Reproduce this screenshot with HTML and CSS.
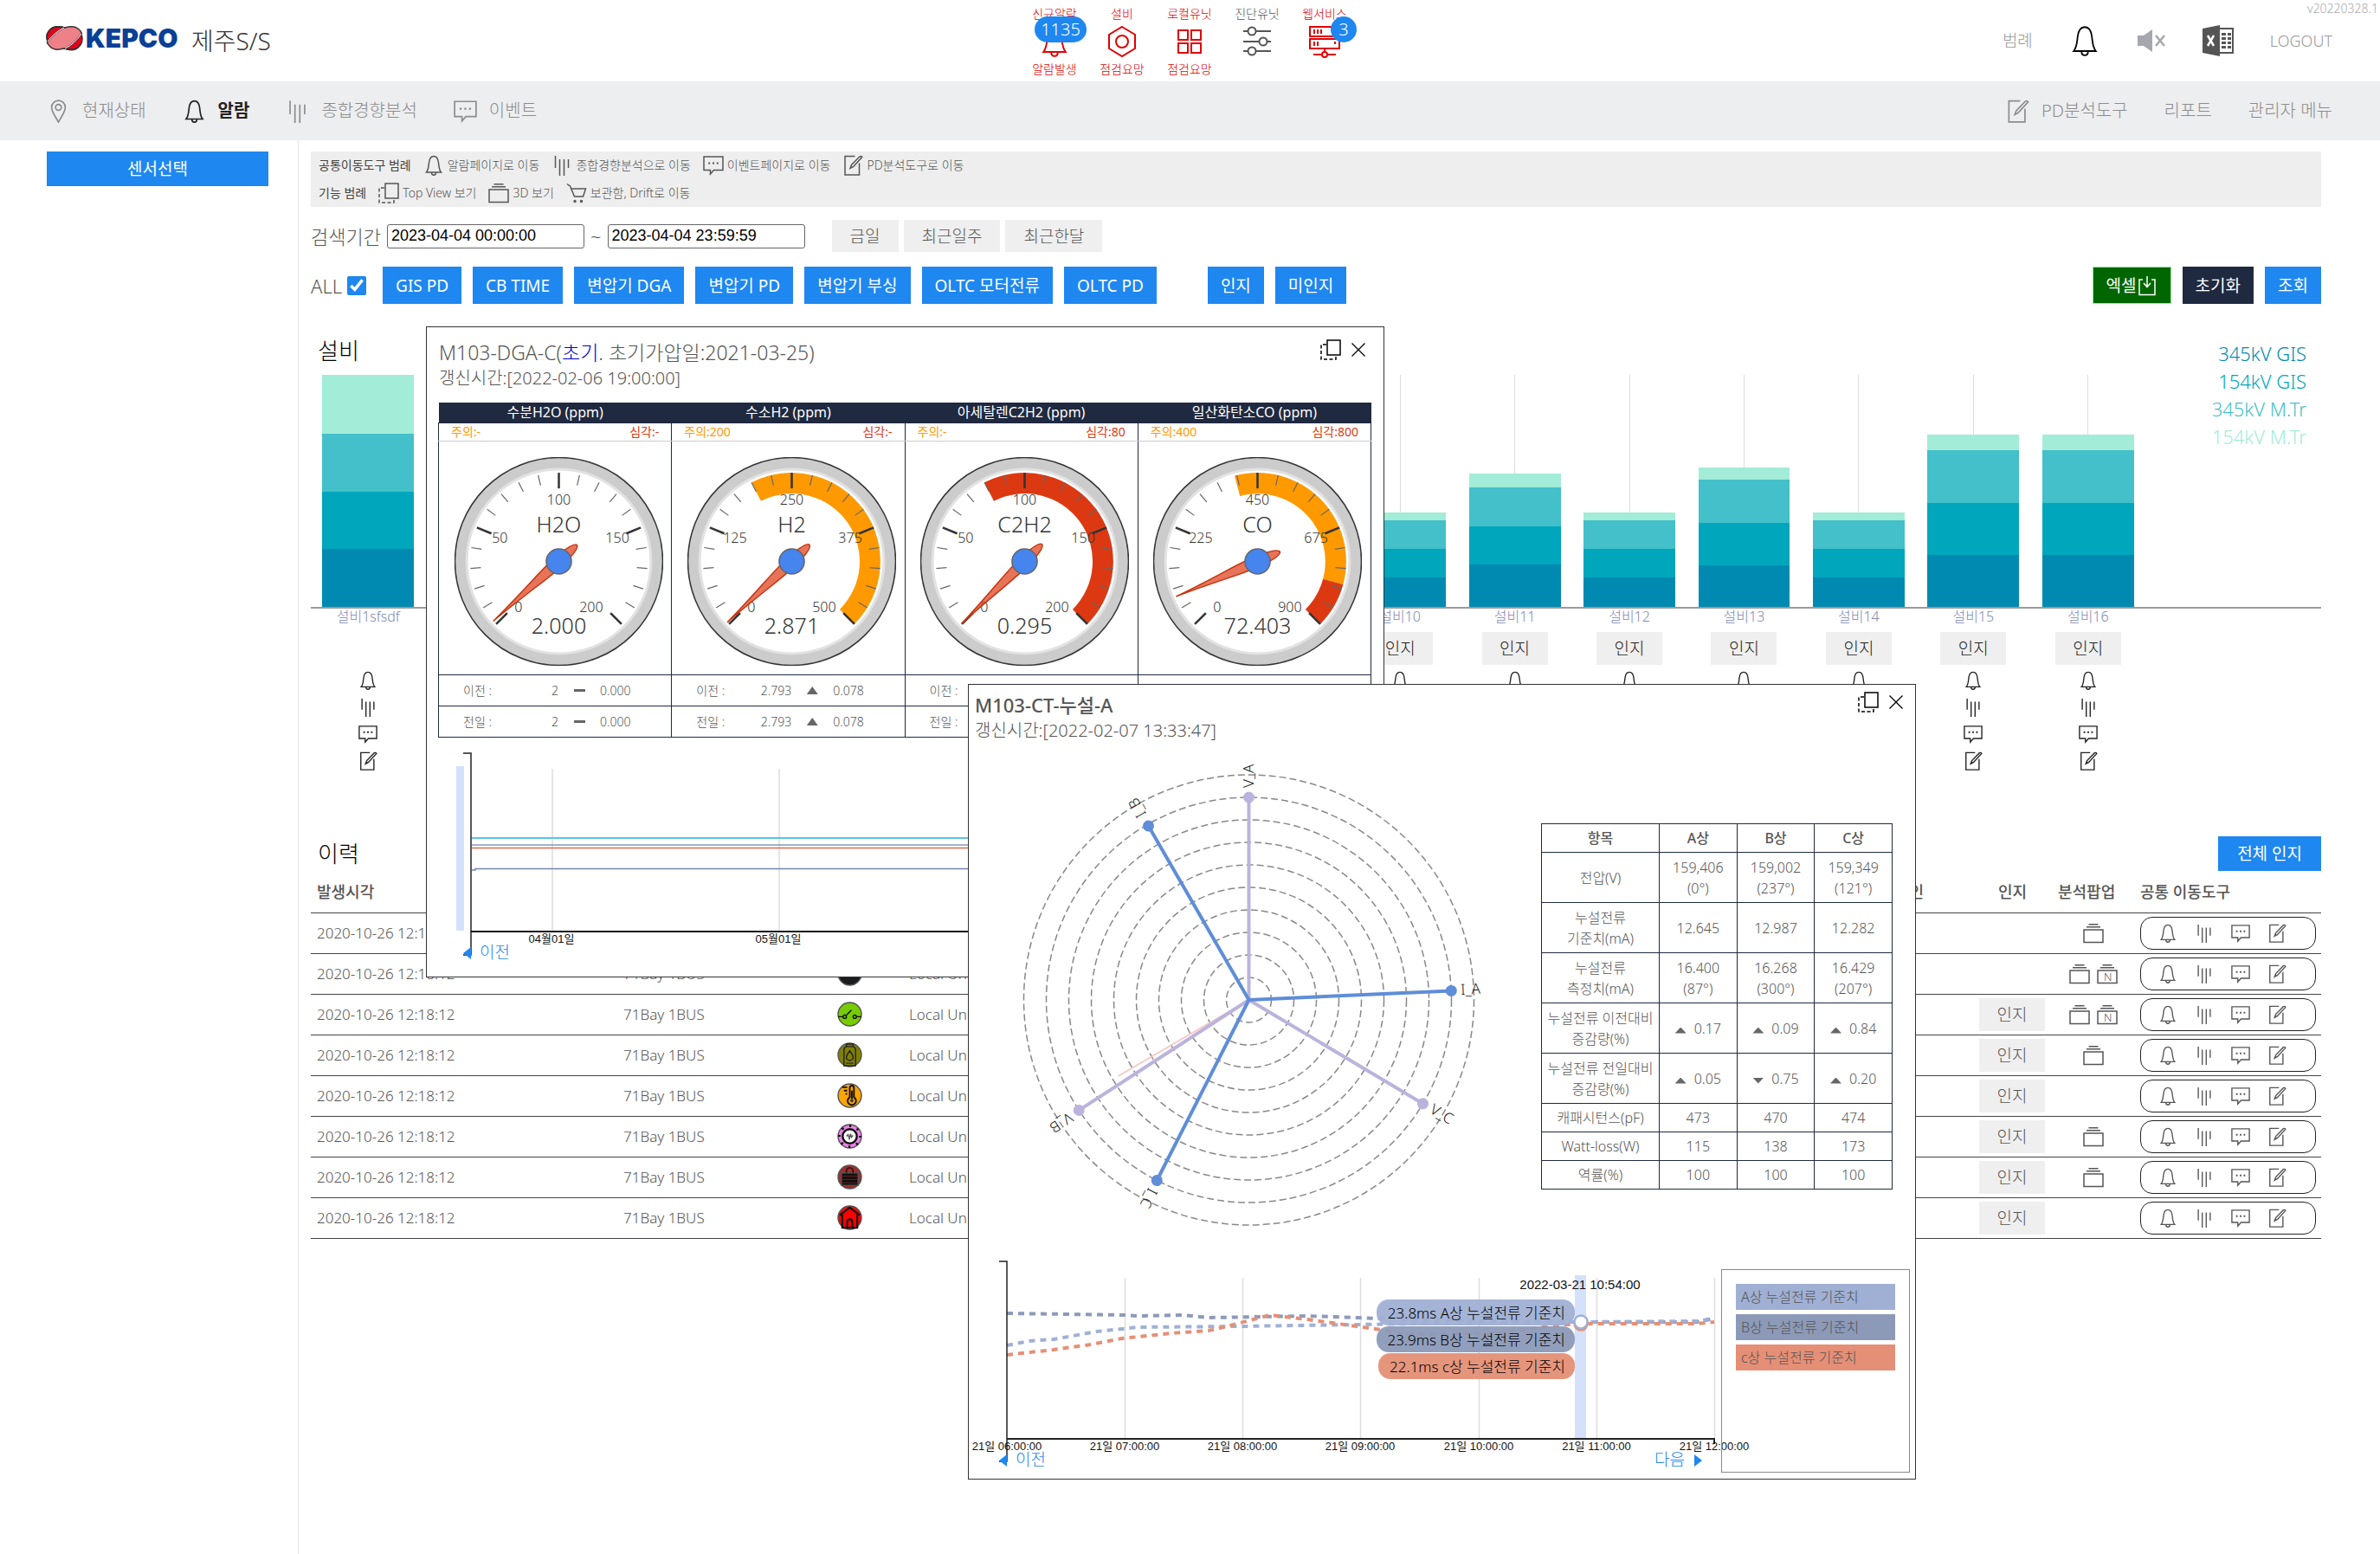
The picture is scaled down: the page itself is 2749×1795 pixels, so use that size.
FILE: index.html
```html
<!DOCTYPE html>
<html lang="ko">
<head>
<meta charset="utf-8">
<meta name="viewport" content="width=device-width, initial-scale=1">
<title>제주S/S 알람</title>
<link rel="stylesheet" href="styles.css">
</head>
<body>

<svg class="sprite" aria-hidden="true">
  <symbol id="i-bell" viewBox="0 0 24 24"><path d="M3.5 20C6 17 6 13 6.500 9C7 4.500 9 1.500 12 1.500S17 4.500 17.500 9C18 13 18 17 20.500 20ZM9.500 20.500C9.500 22.300 10.500 23.200 12 23.200S14.500 22.300 14.500 20.500"/></symbol>
  <symbol id="i-bars" viewBox="0 0 24 24"><path d="M4.500 1V15M9.500 5V24M14.500 5V24M19.500 5V15"/></symbol>
  <symbol id="i-chat" viewBox="0 0 24 24"><path d="M1 2H23V17.500H12.500L8.500 22V17.500H1Z"/><path class="dots" d="M6.200 9.500h2M11 9.500h2M15.800 9.500h2"/></symbol>
  <symbol id="i-edit" viewBox="0 0 24 24"><path d="M14.500 1.500H3V23H19.500V9.500M9 15.500L10.500 11.500L20 1.800Q22 .8 22.700 2.600L12.700 13.500Z"/></symbol>
  <symbol id="i-top" viewBox="0 0 24 24"><path d="M8 1H23V18H8Z"/><path stroke-dasharray="4 2.500" d="M7 6H1V23H18V19"/></symbol>
  <symbol id="i-box" viewBox="0 0 24 24"><path d="M1 8H23V22.500H1ZM4 4.800H20M6.500 1.800H17.500"/></symbol>
  <symbol id="i-boxn" viewBox="0 0 24 24"><path d="M1 8H23V22.500H1ZM4 4.800H20M6.500 1.800H17.500"/><text x="8" y="20">N</text></symbol>
  <symbol id="i-cart" viewBox="0 0 24 24"><path d="M1 1.500L4.500 4L9.500 16H19.500L22.500 7H6"/><circle cx="10" cy="21.500" r="1"/><circle cx="17.500" cy="21.500" r="1"/></symbol>
  <symbol id="i-pin" viewBox="0 0 24 24"><path d="M12 23.300C9 17 5 13 5 8A7 7 0 0 1 19 8C19 13 15 17 12 23.300Z"/><circle cx="12" cy="8" r="3"/></symbol>
  <symbol id="i-x" viewBox="0 0 24 24"><path d="M3 3L21 21M21 3L3 21"/></symbol>
  <symbol id="i-down" viewBox="0 0 24 24"><path d="M7 5H3V22.500H21V5H17M12 1V13M8 9L12 13.500L16 9"/></symbol>
  <symbol id="ticks" viewBox="-120 -120 240 240">
    <circle r="119.500" fill="#ccc" stroke="#333"/>
    <circle r="106" fill="#fff" stroke="#e2e2e2" stroke-width="3"/>
  </symbol>
  <symbol id="marks" viewBox="-120 -120 240 240">
    <g stroke="#666" stroke-width="1.200">
      <path d="M0-102V-90" transform="rotate(-121.500)"/>
      <path d="M0-102V-90" transform="rotate(-108)"/><path d="M0-102V-90" transform="rotate(-94.500)"/><path d="M0-102V-90" transform="rotate(-81)"/>
      <path d="M0-102V-90" transform="rotate(-54)"/><path d="M0-102V-90" transform="rotate(-40.500)"/><path d="M0-102V-90" transform="rotate(-27)"/><path d="M0-102V-90" transform="rotate(-13.500)"/>
      <path d="M0-102V-90" transform="rotate(13.500)"/><path d="M0-102V-90" transform="rotate(27)"/><path d="M0-102V-90" transform="rotate(40.500)"/><path d="M0-102V-90" transform="rotate(54)"/>
      <path d="M0-102V-90" transform="rotate(81)"/><path d="M0-102V-90" transform="rotate(94.500)"/><path d="M0-102V-90" transform="rotate(108)"/><path d="M0-102V-90" transform="rotate(121.500)"/>
    </g>
    <g stroke="#333" stroke-width="2.500">
      <path d="M0-102V-84" transform="rotate(-135)"/><path d="M0-102V-84" transform="rotate(-67.500)"/><path d="M0-102V-84"/><path d="M0-102V-84" transform="rotate(67.500)"/><path d="M0-102V-84" transform="rotate(135)"/>
    </g>
  </symbol>
  <symbol id="needle" viewBox="-120 -120 240 240"><path d="M0-102C-2-50-8-10-6 6C-5 20-3 28 0 28S5 20 6 6C8-10 2-50 0-102Z" fill="#dc3912" fill-opacity=".7" stroke="#c63310"/></symbol>
</svg>

<header class="top">
  <div class="brand">
    <svg class="logo" viewBox="0 0 156 34" role="img" aria-label="KEPCO">
      <path d="M1 18Q-2 9 4 4T21 2Q31-1 36 3T40 10Q41 20 36 25T20 26Q9 29 4 24T1 18Z" fill="#ee8088"/>
      <path d="M1 18Q-2 9 4 4T20 2Q9 7 1 18Z" fill="#e2001a"/>
      <path d="M40 9Q43 19 37 24T21 26Q32 21 40 9Z" fill="#e2001a"/>
      <path d="M20 2Q9 7 1 18M21 26Q32 21 40 9" stroke="#fff" stroke-width="1"/>
      <text x="45" y="25">KEPCO</text>
    </svg>
    <span class="site">제주S/S</span>
  </div>
  <div class="status">
    <a href="#" class="st red"><span>신규알람</span><svg><use href="#i-bell"/></svg><span>알람발생</span><b class="badge wide">1135</b></a>
    <a href="#" class="st red"><span>설비</span><svg viewBox="0 0 36 36"><path d="M18 1L33 10V26L18 35L3 26V10Z"/><circle cx="18" cy="18" r="7"/></svg><span>점검요망</span></a>
    <a href="#" class="st red"><span>로컬유닛</span><svg viewBox="0 0 36 36"><path d="M5 5H16V16H5ZM20 5H31V16H20ZM5 20H16V31H5ZM20 20H31V31H20Z"/></svg><span>점검요망</span></a>
    <a href="#" class="st"><span>진단유닛</span><svg viewBox="0 0 36 36"><path d="M2 6H7M17 6H34M2 18H20M30 18H34M2 29H7M17 29H34"/><circle cx="12" cy="6" r="4.500"/><circle cx="25" cy="18" r="4.500"/><circle cx="12" cy="29" r="4.500"/></svg></a>
    <a href="#" class="st red"><span>웹서비스</span><svg viewBox="0 0 36 36"><path d="M1 1H35V12H1ZM1 15H35V26H1ZM18 26V30M5 33H14M22 33H31M6 4V9M10 4V9M14 4V9M6 18V23M10 18V23M30 18V21"/><circle cx="18" cy="33" r="3"/></svg><b class="badge">3</b></a>
  </div>
  <div class="tools">
    <span class="version">v20220328.1</span>
    <a href="#">범례</a>
    <a href="#" class="bell" aria-label="알람"><svg><use href="#i-bell"/></svg></a>
    <a href="#" aria-label="음소거"><svg class="mute" viewBox="0 0 34 28"><path d="M1 8H8L18 1V27L8 20H1Z" fill="#a6a6ae" stroke="none"/><path d="M22 8L32 20M32 8L22 20" stroke="#a6a6ae" stroke-width="2.500"/></svg></a>
    <a href="#" aria-label="엑셀"><svg class="xls" viewBox="0 0 36 36"><path d="M19 4H35V32H19" fill="#fff" stroke="#555" stroke-width="2"/><path d="M22 9h5v3h-5zM29 9h4v3h-4zM22 14h5v3h-5zM29 14h4v3h-4zM22 19h5v3h-5zM29 19h4v3h-4zM22 24h5v3h-5zM29 24h4v3h-4z" fill="#555" stroke="none"/><path d="M0 4L20 0V36L0 32Z" fill="#555" stroke="none"/><path d="M6 12L13 24M13 12L6 24" stroke="#fff" stroke-width="2.500"/></svg></a>
    <a href="#" class="out">LOGOUT</a>
  </div>
</header>

<nav class="nav">
  <a href="#"><svg><use href="#i-pin"/></svg>현재상태</a>
  <a href="#" class="on"><svg><use href="#i-bell"/></svg>알람</a>
  <a href="#"><svg><use href="#i-bars"/></svg>종합경향분석</a>
  <a href="#"><svg><use href="#i-chat"/></svg>이벤트</a>
  <a href="#" class="push"><svg><use href="#i-edit"/></svg>PD분석도구</a>
  <a href="#">리포트</a>
  <a href="#">관리자 메뉴</a>
</nav>

<div class="page">
<aside class="side"><button class="btn block">센서선택</button></aside>

<main class="main">
  <div class="guide">
    <p><b>공통이동도구 범례</b><span><svg><use href="#i-bell"/></svg>알람페이지로 이동</span><span><svg><use href="#i-bars"/></svg>종합경향분석으로 이동</span><span><svg><use href="#i-chat"/></svg>이벤트페이지로 이동</span><span><svg><use href="#i-edit"/></svg>PD분석도구로 이동</span></p>
    <p><b>기능 범례</b><span><svg><use href="#i-top"/></svg>Top View 보기</span><span><svg><use href="#i-box"/></svg>3D 보기</span><span><svg><use href="#i-cart"/></svg>보관함, Drift로 이동</span></p>
  </div>

  <form class="search">
    <label for="from">검색기간</label>
    <input id="from" type="text" value="2023-04-04 00:00:00">
    <label for="to">~</label>
    <input id="to" type="text" value="2023-04-04 23:59:59">
    <div class="presets">
      <button type="button" class="soft">금일</button>
      <button type="button" class="soft">최근일주</button>
      <button type="button" class="soft">최근한달</button>
    </div>
  </form>

  <div class="filters">
    <label class="all">ALL<input type="checkbox" checked></label>
    <button class="btn">GIS PD</button>
    <button class="btn">CB TIME</button>
    <button class="btn">변압기 DGA</button>
    <button class="btn">변압기 PD</button>
    <button class="btn">변압기 부싱</button>
    <button class="btn">OLTC 모터전류</button>
    <button class="btn">OLTC PD</button>
    <button class="btn apart">인지</button>
    <button class="btn">미인지</button>
    <button class="btn excel">엑셀<svg><use href="#i-down"/></svg></button>
    <button class="btn dark">초기화</button>
    <button class="btn">조회</button>
  </div>

  <section class="equip">
    <h2>설비</h2>
    <ul class="kinds"><li>345kV GIS</li><li>154kV GIS</li><li>345kV M.Tr</li><li>154kV M.Tr</li></ul>
    <div class="chart">
      <div class="col c1">
        <div class="plot"><div class="bar"><i style="height:68px"></i><i style="height:67px"></i><i style="height:66px"></i><i style="height:67px"></i></div></div>
        <span class="name">설비1sfsdf</span><span class="ack"></span>
        <svg><use href="#i-bell"/></svg><svg><use href="#i-bars"/></svg><svg><use href="#i-chat"/></svg><svg><use href="#i-edit"/></svg>
      </div>
      <div class="col c10">
        <div class="plot"><div class="bar"><i style="height:9px"></i><i style="height:33px"></i><i style="height:33px"></i><i style="height:34px"></i></div></div>
        <span class="name">설비10</span><button class="soft ack">인지</button>
        <svg><use href="#i-bell"/></svg><svg><use href="#i-bars"/></svg><svg><use href="#i-chat"/></svg><svg><use href="#i-edit"/></svg>
      </div>
      <div class="col">
        <div class="plot"><div class="bar"><i style="height:16px"></i><i style="height:45px"></i><i style="height:44px"></i><i style="height:49px"></i></div></div>
        <span class="name">설비11</span><button class="soft ack">인지</button>
        <svg><use href="#i-bell"/></svg><svg><use href="#i-bars"/></svg><svg><use href="#i-chat"/></svg><svg><use href="#i-edit"/></svg>
      </div>
      <div class="col">
        <div class="plot"><div class="bar"><i style="height:9px"></i><i style="height:33px"></i><i style="height:33px"></i><i style="height:34px"></i></div></div>
        <span class="name">설비12</span><button class="soft ack">인지</button>
        <svg><use href="#i-bell"/></svg><svg><use href="#i-bars"/></svg><svg><use href="#i-chat"/></svg><svg><use href="#i-edit"/></svg>
      </div>
      <div class="col">
        <div class="plot"><div class="bar"><i style="height:14px"></i><i style="height:50px"></i><i style="height:49px"></i><i style="height:48px"></i></div></div>
        <span class="name">설비13</span><button class="soft ack">인지</button>
        <svg><use href="#i-bell"/></svg><svg><use href="#i-bars"/></svg><svg><use href="#i-chat"/></svg><svg><use href="#i-edit"/></svg>
      </div>
      <div class="col">
        <div class="plot"><div class="bar"><i style="height:9px"></i><i style="height:33px"></i><i style="height:33px"></i><i style="height:34px"></i></div></div>
        <span class="name">설비14</span><button class="soft ack">인지</button>
        <svg><use href="#i-bell"/></svg><svg><use href="#i-bars"/></svg><svg><use href="#i-chat"/></svg><svg><use href="#i-edit"/></svg>
      </div>
      <div class="col">
        <div class="plot"><div class="bar"><i style="height:18px"></i><i style="height:61px"></i><i style="height:60px"></i><i style="height:60px"></i></div></div>
        <span class="name">설비15</span><button class="soft ack">인지</button>
        <svg><use href="#i-bell"/></svg><svg><use href="#i-bars"/></svg><svg><use href="#i-chat"/></svg><svg><use href="#i-edit"/></svg>
      </div>
      <div class="col">
        <div class="plot"><div class="bar"><i style="height:18px"></i><i style="height:61px"></i><i style="height:60px"></i><i style="height:60px"></i></div></div>
        <span class="name">설비16</span><button class="soft ack">인지</button>
        <svg><use href="#i-bell"/></svg><svg><use href="#i-bars"/></svg><svg><use href="#i-chat"/></svg><svg><use href="#i-edit"/></svg>
      </div>
      <div class="axis"></div>
    </div>
  </section>

  <section class="history">
    <div class="bar-head"><h2>이력</h2><button class="btn all-ack">전체 인지</button></div>
    <table class="log">
      <colgroup><col class="w1"><col class="w2"><col class="w3"><col><col class="w5"><col class="w6"><col class="w7"><col class="w8"></colgroup>
      <thead><tr><th>발생시각</th><th></th><th></th><th></th><th>확인</th><th class="mid">인지</th><th>분석팝업</th><th>공통 이동도구</th></tr></thead>
      <tbody>
        <tr><td>2020-10-26 12:18:12</td><td>71Bay 1BUS</td><td></td><td>Local Unit</td><td></td><td></td><td class="mid"><svg><use href="#i-box"/></svg></td><td><div class="pill"><svg><use href="#i-bell"/></svg><svg><use href="#i-bars"/></svg><svg><use href="#i-chat"/></svg><svg><use href="#i-edit"/></svg></div></td></tr>
        <tr><td>2020-10-26 12:18:12</td><td>71Bay 1BUS</td><td class="mid"><svg class="kind" viewBox="0 0 28 28"><circle cx="14" cy="14" r="14" fill="#1b1c1e"/><path d="M9 10L19 18M19 10L9 18" stroke="#fff"/></svg></td><td>Local Unit</td><td></td><td></td><td class="mid"><svg><use href="#i-box"/></svg><svg><use href="#i-boxn"/></svg></td><td><div class="pill"><svg><use href="#i-bell"/></svg><svg><use href="#i-bars"/></svg><svg><use href="#i-chat"/></svg><svg><use href="#i-edit"/></svg></div></td></tr>
        <tr><td>2020-10-26 12:18:12</td><td>71Bay 1BUS</td><td class="mid"><svg class="kind" viewBox="0 0 28 28"><circle cx="14" cy="14" r="14" fill="#7c0"/><path d="M0 17H6M10 15L16 9M22 17H28" stroke="#111" stroke-width="1.500"/><circle cx="8" cy="17" r="2" stroke="#111" stroke-width="1.500"/><circle cx="20" cy="17" r="2" stroke="#111" stroke-width="1.500"/></svg></td><td>Local Unit</td><td></td><td><button class="soft ack">인지</button></td><td class="mid"><svg><use href="#i-box"/></svg><svg><use href="#i-boxn"/></svg></td><td><div class="pill"><svg><use href="#i-bell"/></svg><svg><use href="#i-bars"/></svg><svg><use href="#i-chat"/></svg><svg><use href="#i-edit"/></svg></div></td></tr>
        <tr><td>2020-10-26 12:18:12</td><td>71Bay 1BUS</td><td class="mid"><svg class="kind" viewBox="0 0 28 28"><circle cx="14" cy="14" r="14" fill="#808000"/><path d="M10 1H18V4H10ZM10 4Q7 5 7 8V27H21V8Q21 5 18 4M14 9Q10 14 10 17A4 3.500 0 0 0 18 17Q18 14 14 9Z" stroke="#222" stroke-width="1.500"/><path d="M10 24H18" stroke="#222" stroke-width="2" stroke-dasharray="2 1"/></svg></td><td>Local Unit</td><td></td><td><button class="soft ack">인지</button></td><td class="mid"><svg><use href="#i-box"/></svg></td><td><div class="pill"><svg><use href="#i-bell"/></svg><svg><use href="#i-bars"/></svg><svg><use href="#i-chat"/></svg><svg><use href="#i-edit"/></svg></div></td></tr>
        <tr><td>2020-10-26 12:18:12</td><td>71Bay 1BUS</td><td class="mid"><svg class="kind" viewBox="0 0 28 28"><circle cx="14" cy="14" r="14" fill="#ffa500"/><path d="M14 16V5Q14 2 16.500 2T19 5V16A5 5 0 1 1 14 16ZM5 4H11M7 8H11M9 12H11M16.500 8V20" stroke="#111" stroke-width="2"/><circle cx="16.500" cy="20" r="1.500" fill="#111"/></svg></td><td>Local Unit</td><td></td><td><button class="soft ack">인지</button></td><td></td><td><div class="pill"><svg><use href="#i-bell"/></svg><svg><use href="#i-bars"/></svg><svg><use href="#i-chat"/></svg><svg><use href="#i-edit"/></svg></div></td></tr>
        <tr><td>2020-10-26 12:18:12</td><td>71Bay 1BUS</td><td class="mid"><svg class="kind" viewBox="0 0 28 28"><circle cx="14" cy="14" r="14" fill="#ee82ee"/><circle cx="14" cy="14" r="12.500" stroke="#111" stroke-width="3" stroke-dasharray="2.500 7.317" stroke-dashoffset="1"/><circle cx="14" cy="14" r="8.500" fill="#fff" stroke="#111" stroke-width="2.500"/><path d="M10 14L12 12L13.500 17L15 11L16 15L18 13" stroke="#555"/></svg></td><td>Local Unit</td><td></td><td><button class="soft ack">인지</button></td><td class="mid"><svg><use href="#i-box"/></svg></td><td><div class="pill"><svg><use href="#i-bell"/></svg><svg><use href="#i-bars"/></svg><svg><use href="#i-chat"/></svg><svg><use href="#i-edit"/></svg></div></td></tr>
        <tr><td>2020-10-26 12:18:12</td><td>71Bay 1BUS</td><td class="mid"><svg class="kind" viewBox="0 0 28 28"><circle cx="14" cy="14" r="14" fill="#a52a2a"/><path d="M4 9H24V24H4Z" fill="#111"/><path d="M10 9V7A4 4 0 0 1 18 7V9" stroke="#111" stroke-width="1.500"/><path d="M5 13H23M5 17H23M5 21H23" stroke="#a52a2a" stroke-width="1" stroke-opacity=".6"/></svg></td><td>Local Unit</td><td></td><td><button class="soft ack">인지</button></td><td class="mid"><svg><use href="#i-box"/></svg></td><td><div class="pill"><svg><use href="#i-bell"/></svg><svg><use href="#i-bars"/></svg><svg><use href="#i-chat"/></svg><svg><use href="#i-edit"/></svg></div></td></tr>
        <tr><td>2020-10-26 12:18:12</td><td>71Bay 1BUS</td><td class="mid"><svg class="kind" viewBox="0 0 28 28"><circle cx="14" cy="14" r="14" fill="red"/><path d="M2 11L14 2L26 11M5 10V26H23V10M11 26V19A3 3 0 0 1 17 19V26" stroke="#111" stroke-width="2.200"/></svg></td><td>Local Unit</td><td></td><td><button class="soft ack">인지</button></td><td></td><td><div class="pill"><svg><use href="#i-bell"/></svg><svg><use href="#i-bars"/></svg><svg><use href="#i-chat"/></svg><svg><use href="#i-edit"/></svg></div></td></tr>
      </tbody>
    </table>
  </section>
</main>
</div>

<section class="win win-dga">
  <div class="win-head">
    <div><h3>M103-DGA-C(<em>초기</em>. 초기가압일:2021-03-25)</h3><p>갱신시간:[2022-02-06 19:00:00]</p></div>
    <button class="ico" aria-label="Top View"><svg><use href="#i-top"/></svg></button>
    <button class="ico" aria-label="닫기"><svg class="x"><use href="#i-x"/></svg></button>
  </div>
  <table class="gauges">
    <thead><tr><th>수분H2O (ppm)</th><th>수소H2 (ppm)</th><th>아세탈렌C2H2 (ppm)</th><th>일산화탄소CO (ppm)</th></tr></thead>
    <tbody>
      <tr class="limits">
        <td><div><span>주의:-</span><b>심각:-</b></div></td>
        <td><div><span>주의:200</span><b>심각:-</b></div></td>
        <td><div><span>주의:-</span><b>심각:80</b></div></td>
        <td><div><span>주의:400</span><b>심각:800</b></div></td>
      </tr>
      <tr class="dials">
        <td><svg viewBox="-120 -120 240 240"><use href="#ticks" x="-120" y="-120" width="240" height="240"/><use href="#marks" x="-120" y="-120" width="240" height="240"/>
          <text class="s" y="-65" text-anchor="middle">100</text><text class="s" x="-77" y="-21">50</text><text class="s" x="81" y="-21" text-anchor="end">150</text><text class="s" x="-51" y="58">0</text><text class="s" x="51" y="58" text-anchor="end">200</text><text class="l" y="-33" text-anchor="middle">H2O</text><text class="l" y="83" text-anchor="middle">2.000</text>
          <g transform="rotate(-132.300)"><use href="#needle" x="-120" y="-120" width="240" height="240"/></g><circle r="14.500" fill="#4684ee" stroke="#666"/></svg></td>
        <td><svg viewBox="-120 -120 240 240"><use href="#ticks" x="-120" y="-120" width="240" height="240"/><path d="M-46.300-90.900A102 102 0 0 1 72.100 72.100L55.200 55.200A78 78 0 0 0-35.400-69.500Z" fill="#f90"/><use href="#marks" x="-120" y="-120" width="240" height="240"/>
          <text class="s" y="-65" text-anchor="middle">250</text><text class="s" x="-79" y="-21">125</text><text class="s" x="81" y="-21" text-anchor="end">375</text><text class="s" x="-51" y="58">0</text><text class="s" x="51" y="58" text-anchor="end">500</text><text class="l" y="-33" text-anchor="middle">H2</text><text class="l" y="83" text-anchor="middle">2.871</text>
          <g transform="rotate(-133.400)"><use href="#needle" x="-120" y="-120" width="240" height="240"/></g><circle r="14.500" fill="#4684ee" stroke="#666"/></svg></td>
        <td><svg viewBox="-120 -120 240 240"><use href="#ticks" x="-120" y="-120" width="240" height="240"/><path d="M-46.300-90.900A102 102 0 0 1 72.100 72.100L55.200 55.200A78 78 0 0 0-35.400-69.500Z" fill="#dc3912"/><use href="#marks" x="-120" y="-120" width="240" height="240"/>
          <text class="s" y="-65" text-anchor="middle">100</text><text class="s" x="-77" y="-21">50</text><text class="s" x="81" y="-21" text-anchor="end">150</text><text class="s" x="-51" y="58">0</text><text class="s" x="51" y="58" text-anchor="end">200</text><text class="l" y="-33" text-anchor="middle">C2H2</text><text class="l" y="83" text-anchor="middle">0.295</text>
          <g transform="rotate(-134.600)"><use href="#needle" x="-120" y="-120" width="240" height="240"/></g><circle r="14.500" fill="#4684ee" stroke="#666"/></svg></td>
        <td><svg viewBox="-120 -120 240 240"><use href="#ticks" x="-120" y="-120" width="240" height="240"/><path d="M-26.400-98.500A102 102 0 0 1 98.500 26.400L75.300 20.200A78 78 0 0 0-20.200-75.300Z" fill="#f90"/><path d="M98.500 26.400A102 102 0 0 1 72.100 72.100L55.200 55.200A78 78 0 0 0 75.300 20.200Z" fill="#dc3912"/><use href="#marks" x="-120" y="-120" width="240" height="240"/>
          <text class="s" y="-65" text-anchor="middle">450</text><text class="s" x="-79" y="-21">225</text><text class="s" x="81" y="-21" text-anchor="end">675</text><text class="s" x="-51" y="58">0</text><text class="s" x="51" y="58" text-anchor="end">900</text><text class="l" y="-33" text-anchor="middle">CO</text><text class="l" y="83" text-anchor="middle">72.403</text>
          <g transform="rotate(-113.300)"><use href="#needle" x="-120" y="-120" width="240" height="240"/></g><circle r="14.500" fill="#4684ee" stroke="#666"/></svg></td>
      </tr>
      <tr class="diff">
        <td><div><span>이전 :</span><span>2</span><i class="flat"></i><span>0.000</span></div></td>
        <td><div><span>이전 :</span><span>2.793</span><i class="up"></i><span>0.078</span></div></td>
        <td><div><span>이전 :</span></div></td>
        <td></td>
      </tr>
      <tr class="diff">
        <td><div><span>전일 :</span><span>2</span><i class="flat"></i><span>0.000</span></div></td>
        <td><div><span>전일 :</span><span>2.793</span><i class="up"></i><span>0.078</span></div></td>
        <td><div><span>전일 :</span></div></td>
        <td></td>
      </tr>
    </tbody>
  </table>
  <svg class="trend" viewBox="493 860 1105 268">
    <path d="M638 888V1075M900 888V1075" stroke="#ddd"/>
    <path d="M527 885H536V1075H527Z" fill="#d5e0fb"/>
    <path d="M545 968H1590" stroke="#5cc4e0" stroke-width="2"/>
    <path d="M545 976H1590" stroke="#8a96b5" stroke-width="1.500"/>
    <path d="M545 979.500H1590" stroke="#dd6a52" stroke-width="1.500"/>
    <path d="M545 1005H549V1003.500H1590" stroke="#6f86ab" stroke-width="1.500"/>
    <path d="M535 870H544V1103H535" stroke="#222" stroke-width="1.500"/>
    <path d="M544 1076H1590" stroke="#111" stroke-width="2"/>
    <path d="M544 1094V1108L535 1101Z" fill="#1e87f0"/>
    <text class="ax" x="637" y="1089" text-anchor="middle">04월01일</text><text class="ax" x="899" y="1089" text-anchor="middle">05월01일</text>
    <text class="go" x="554" y="1107">이전</text>
  </svg>
</section>

<section class="win win-ct">
  <div class="win-head">
    <div><h3 class="strong">M103-CT-누설-A</h3><p>갱신시간:[2022-02-07 13:33:47]</p></div>
    <button class="ico" aria-label="Top View"><svg><use href="#i-top"/></svg></button>
    <button class="ico" aria-label="닫기"><svg class="x"><use href="#i-x"/></svg></button>
  </div>
  <div class="ct-body">
    <svg class="radar" viewBox="-323 -290 660 565">
      <g stroke="#888" stroke-width="1.500" stroke-dasharray="8 4"><circle r="26"/><circle r="52"/><circle r="78"/><circle r="104"/><circle r="130"/><circle r="156"/><circle r="182"/><circle r="208"/><circle r="234"/><circle r="260"/></g>
      <path d="M0 0L-151 88" stroke="#f6c6c0"/>
      <g class="v"><g transform="rotate(-90)"><path d="M0 0H234"/><circle cx="234" r="6.500"/><text x="245" y="5">V_A</text></g>
      <g transform="rotate(147)"><path d="M0 0H234"/><circle cx="234" r="6.500"/><text x="245" y="5">V_B</text></g>
      <g transform="rotate(30.800)"><path d="M0 0H234"/><circle cx="234" r="6.500"/><text x="245" y="5">V_C</text></g></g>
      <g class="i"><g transform="rotate(-2.600)"><path d="M0 0H234"/><circle cx="234" r="6.500"/><text x="245" y="5">I_A</text></g>
      <g transform="rotate(-120)"><path d="M0 0H232"/><circle cx="232" r="6.500"/><text x="245" y="5">I_B</text></g>
      <g transform="rotate(117)"><path d="M0 0H234"/><circle cx="234" r="6.500"/><text x="245" y="5">I_C</text></g></g>
    </svg>
    <table class="phase">
      <thead><tr><th>항목</th><th>A상</th><th>B상</th><th>C상</th></tr></thead>
      <tbody>
        <tr class="two"><td>전압(V)</td><td>159,406<br>(0°)</td><td>159,002<br>(237°)</td><td>159,349<br>(121°)</td></tr>
        <tr class="two"><td>누설전류<br>기준치(mA)</td><td>12.645</td><td>12.987</td><td>12.282</td></tr>
        <tr class="two"><td>누설전류<br>측정치(mA)</td><td>16.400<br>(87°)</td><td>16.268<br>(300°)</td><td>16.429<br>(207°)</td></tr>
        <tr class="two"><td>누설전류 이전대비<br>증감량(%)</td><td><i class="up"></i>0.17</td><td><i class="up"></i>0.09</td><td><i class="up"></i>0.84</td></tr>
        <tr class="two"><td>누설전류 전일대비<br>증감량(%)</td><td><i class="up"></i>0.05</td><td><i class="down"></i>0.75</td><td><i class="up"></i>0.20</td></tr>
        <tr><td>캐패시턴스(pF)</td><td>473</td><td>470</td><td>474</td></tr>
        <tr><td>Watt-loss(W)</td><td>115</td><td>138</td><td>173</td></tr>
        <tr><td>역률(%)</td><td>100</td><td>100</td><td>100</td></tr>
      </tbody>
    </table>
  </div>
  <div class="ct-foot">
    <svg class="trend" viewBox="1119 1430 869 277">
      <path d="M1299.500 1476V1661M1435.500 1476V1661M1571.500 1476V1661M1708.500 1476V1661M1844.500 1476V1661M1980.500 1476V1661" stroke="#ddd"/>
      <path d="M1819 1473H1832V1661H1819Z" fill="#d5e0fb"/>
      <g stroke-width="4" stroke-dasharray="7 6">
        <path d="M1163 1517L1299 1519L1314 1520L1367 1519L1396 1522L1510 1520L1596 1523L1720 1526L1826 1527L1960 1527L1980 1523" stroke="#8c9ab8"/>
        <path d="M1163 1554L1189 1549L1217 1547L1267 1538L1314 1533L1435 1532L1567 1530L1700 1528L1826 1527L1964 1526L1980 1522" stroke="#a0b0d4"/>
        <path d="M1163 1565L1217 1559L1260 1553L1296 1546L1353 1540L1396 1537L1417 1532L1467 1519L1510 1524L1567 1532L1596 1536L1624 1541L1731 1540L1796 1531L1826 1529L1960 1529L1980 1527" stroke="#e58f76"/>
      </g>
      <path d="M1154 1457H1163V1688H1154" stroke="#222" stroke-width="1.500"/>
      <path d="M1163 1662H1980V1668" stroke="#222" stroke-width="2"/>
      <circle cx="1826" cy="1529" r="7.500" fill="#fff" stroke="#e58f76" stroke-width="2.500"/>
      <circle cx="1826" cy="1527" r="7.500" fill="#fff" stroke="#a0b0d4" stroke-width="2.500"/>
      <g fill-opacity=".95"><rect x="1590" y="1501" width="229" height="30" rx="14" fill="#a0b0d4"/><rect x="1590" y="1532" width="229" height="30" rx="14" fill="#8c9ab8"/><rect x="1592" y="1563" width="227" height="30" rx="14" fill="#e58f76"/></g>
      <g class="tip"><text x="1808" y="1523" text-anchor="end">23.8ms A상 누설전류 기준치</text><text x="1808" y="1554" text-anchor="end">23.9ms B상 누설전류 기준치</text><text x="1808" y="1585" text-anchor="end">22.1ms c상 누설전류 기준치</text></g>
      <text class="date" x="1825" y="1489" text-anchor="middle">2022-03-21 10:54:00</text>
      <g class="ax" text-anchor="middle"><text x="1163" y="1675">21일 06:00:00</text><text x="1299" y="1675">21일 07:00:00</text><text x="1435" y="1675">21일 08:00:00</text><text x="1571" y="1675">21일 09:00:00</text><text x="1708" y="1675">21일 10:00:00</text><text x="1844" y="1675">21일 11:00:00</text><text x="1980" y="1675">21일 12:00:00</text></g>
      <path d="M1163 1680V1694L1154 1687Z" fill="#1e87f0"/><path d="M1957 1680V1694L1966 1687Z" fill="#1e87f0"/>
      <text class="go" x="1173" y="1693">이전</text><text class="go" x="1911" y="1693">다음</text>
    </svg>
    <ul class="keys"><li>A상 누설전류 기준치</li><li>B상 누설전류 기준치</li><li>c상 누설전류 기준치</li></ul>
  </div>
</section>
</body>
</html>
```
FILE: styles.css
```css
* { box-sizing: border-box; }
body {
  margin: 0;
  position: relative;
  min-height: 100vh;
  display: flex;
  flex-direction: column;
  background: #fff;
  color: #555;
  font: 300 18px/24px "Noto Sans", "Noto Sans CJK KR", sans-serif;
}
h2, h3, p, ul { margin: 0; padding: 0; font-weight: inherit; list-style: none; }
a { color: inherit; text-decoration: none; }
button { font: inherit; border: 0; padding: 0; margin: 0; color: inherit; background: none; cursor: pointer; }
svg { width: 24px; height: 24px; fill: none; stroke: currentColor; stroke-width: 1.5; flex: none; overflow: visible; }
svg text { stroke: none; fill: currentColor; }
.dots { stroke-width: 2; }
#i-boxn text { font-size: 13px; }
.sprite { position: absolute; width: 0; height: 0; }

/* header */
.top { display: grid; grid-template-columns: 1fr auto 1fr; height: 94px; padding: 0 55px 0 54px; }
.brand { display: flex; align-items: center; gap: 11px; font-size: 28px; line-height: 36px; color: #333; }
.logo { width: 156px; height: 34px; }
.logo text { font: 900 30px/1 Inter, sans-serif; fill: #0a4096; }
.status { display: flex; padding-top: 7px; }
.st { position: relative; width: 78px; display: flex; flex-direction: column; align-items: center; gap: 5px; font-size: 14px; line-height: 18px; }
.st svg { width: 36px; height: 36px; stroke-width: 2; }
.st svg:not([viewBox]) { stroke-width: 1.3; }
.red { color: #e00000; }
.badge { position: absolute; top: 12px; left: 46px; min-width: 30px; height: 30px; border-radius: 15px; background: #1e87f0; color: #fff; font-size: 20px; line-height: 29px; font-weight: 300; text-align: center; }
.badge.wide { left: 16px; width: 60px; }
.tools { display: flex; justify-content: flex-end; align-items: center; gap: 42px; color: #999; font-size: 19px; }
.tools a { display: flex; }
.tools .out { font-size: 18px; }
.tools svg { width: 34px; height: 28px; }
.tools .bell { color: #000; }
.tools .bell svg { width: 36px; height: 36px; stroke-width: 1.2; }
.tools .xls { width: 36px; height: 36px; }
.version { position: absolute; top: 1px; right: 2px; font-size: 14px; line-height: 18px; color: #aaa; }

/* navigation */
.nav { display: flex; align-items: center; gap: 42px; height: 68px; padding: 0 55px 0 54px; background: #edeef0; color: #8c8c8c; font-size: 20px; }
.nav a { display: flex; align-items: center; gap: 14px; }
.nav svg { width: 27px; height: 27px; }
.nav .on { color: #222; font-weight: 700; }
.nav .push { margin-left: auto; }

.page { flex: 1; display: flex; }
.side { flex: none; width: 345px; padding: 13px 34px 0 54px; border-right: 1px solid #e2e2e2; }
.main { flex: 1; min-width: 0; padding: 13px 68px 0 14px; }

.btn { height: 43px; padding: 0 15px; background: #1e87f0; color: #fff; font-size: 19px; font-weight: 400; white-space: nowrap; }
.btn.block { width: 100%; height: 40px; }
.soft { background: #efefef; height: 37px; padding: 0 21px; font-size: 19px; }

.guide { background: #eee; padding: 0 9px; font-size: 14px; }
.guide p { display: flex; align-items: center; gap: 14px; height: 32px; }
.guide b { font-weight: 400; color: #444; }
.guide span { display: flex; align-items: center; gap: 4px; }

.search { display: flex; align-items: center; gap: 7px; margin-top: 15px; height: 37px; }
.search label { font-size: 22px; }
.search input { width: 228px; height: 28px; padding: 0 4px; border: 1px solid #666; border-radius: 3px; font: 18px "Liberation Sans", sans-serif; color: #000; }
.presets { display: flex; gap: 6px; margin-left: 24px; }

.filters { display: flex; gap: 13px; margin-top: 17px; }
.all { display: flex; align-items: center; gap: 6px; margin-right: 6px; font-size: 22px; }
.all input { width: 22px; height: 22px; margin: 0; accent-color: #1e87f0; }
.apart { margin-left: 46px; }
.excel { margin-left: auto; display: flex; align-items: center; background: #060; border: 1px solid #90ee90; }
.dark { background: #1f2940; }

/* equipment chart */
.equip { position: relative; margin-top: 38px; }
h2 { padding-left: 8px; font-size: 26px; line-height: 32px; font-weight: 300; color: #000; }
.kinds { position: absolute; z-index: 1; top: 3px; right: 17px; text-align: right; font-size: 22px; line-height: 32px; color: #008ab1; }
.kinds li:nth-child(2) { color: #00a6bc; }
.kinds li:nth-child(3) { color: #43c0c9; }
.kinds li:nth-child(4) { color: #a2ecd8; }
.chart { position: relative; display: grid; grid-template-columns: repeat(16, 1fr); margin-top: 12px; padding-right: 203px; }
.axis { position: absolute; top: 268px; left: 0; right: 0; height: 2px; background: #999; }
.col { display: flex; flex-direction: column; align-items: center; gap: 9px; color: #222; }
.col svg { width: 22px; height: 22px; }
.c10 { grid-column: 10; }
.plot { width: 100%; height: 268px; display: flex; flex-direction: column; align-items: center; background: linear-gradient(#ddd, #ddd) center / 1px 100% no-repeat; }
.bar { width: 80%; margin-top: auto; }
.bar i { display: block; background: #008ab1; }
.bar i:nth-child(1) { background: #a2ecd8; }
.bar i:nth-child(2) { background: #43c0c9; }
.bar i:nth-child(3) { background: #00a6bc; }
.name { margin: -8px 0 -1px; font-size: 16px; line-height: 20px; color: #8088b4; }
.ack { width: 76px; height: 38px; padding: 0; }
.col .ack { margin-bottom: -2px; }

/* history */
.history { margin-top: 76px; }
.bar-head { display: flex; align-items: center; justify-content: space-between; }
.all-ack { height: 40px; padding: 0 22px; }
.log { width: 100%; table-layout: fixed; border-collapse: collapse; font-size: 17px; }
.w1 { width: 354px; } .w2 { width: 206px; } .w3 { width: 124px; } .w5 { width: 97px; } .w6 { width: 91px; } .w7 { width: 95px; } .w8 { width: 216px; }
.log th, .log td { height: 47px; padding: 0 7px; text-align: left; border-bottom: 1px solid #444; }
.log th { height: 48px; font-size: 18px; font-weight: 500; }
.log .mid { text-align: center; }
.log td svg { vertical-align: middle; margin: 0 4px; }
.log td .kind { width: 27px; height: 27px; }
.log th, .log td { white-space: nowrap; }
.pill { display: flex; align-items: center; gap: 20px; height: 38px; width: 203px; padding-left: 20px; border: 1px solid #222; border-radius: 14px; }
.log .pill svg { width: 22px; height: 22px; margin: 0; }

/* floating windows */
.win { position: absolute; background: #fff; border: 1px solid #333; }
.win-dga { left: 492px; top: 377px; width: 1107px; }
.win-ct { left: 1118px; top: 790px; width: 1095px; }
.win-head { display: flex; align-items: flex-start; gap: 8px; padding: 14px 17px 0 14px; }
.win-ct .win-head { padding: 8px 10px 0 7px; }
.win-head div { flex: 1; }
.win-head h3 { font-size: 23px; line-height: 30px; }
.win-head .strong { font-size: 22px; font-weight: 500; }
.win-head em { font-style: normal; color: #00c; }
.win-head p { font-size: 20px; line-height: 30px; }
.ico { display: flex; width: 24px; height: 24px; align-items: center; justify-content: center; color: #000; }
.ico .x { width: 20px; height: 20px; }
.win .trend { display: block; width: 100%; height: auto; stroke: none; }

.gauges { width: 1078px; margin: 13px 0 8px 13px; table-layout: fixed; border-collapse: collapse; font-size: 14px; }
.gauges th { height: 23px; padding: 0; background: #1f2940; color: #fff; font-size: 16px; line-height: 23px; font-weight: 400; }
.gauges td { padding: 0; border: 1px solid #1f2940; }
.limits div { display: flex; justify-content: space-between; padding: 0 14px; line-height: 20px; color: #f90; font-weight: 400; }
.limits b { font-weight: 400; color: #dc3912; }
.gauges .limits td { border-bottom-color: #ccc; }
.gauges .dials td { height: 270px; padding: 18px 0 0 8px; vertical-align: top; border-top-color: #ccc; }
.dials svg { display: block; margin: 0 auto; width: 241px; height: 241px; stroke: none; color: #333; }
.dials .s { font-size: 16px; }
.dials .l { font-size: 25px; }
.diff div { display: grid; grid-template-columns: 60px 50px 48px 1fr; align-items: center; justify-items: center; padding-left: 28px; height: 35px; }
.diff span { justify-self: end; }
.diff span:first-child, .diff span:last-child { justify-self: start; }
.up, .down, .flat { display: inline-block; background: #666; width: 13px; height: 9px; clip-path: polygon(50% 0, 100% 100%, 0 100%); }
.down { clip-path: polygon(0 0, 100% 0, 50% 100%); }
.flat { height: 3px; clip-path: none; }
.ax { font: 13px "Liberation Sans", "Noto Sans CJK KR", sans-serif; color: #111; }
.date { font: 15px "Liberation Sans", sans-serif; color: #111; }
.go { font-size: 19px; color: #1e87f0; }
.tip { font: 300 17px "Noto Sans", "Noto Sans CJK KR", sans-serif; color: #000; }

.ct-body { display: flex; align-items: flex-start; margin-top: 6px; }
.radar { width: 661px; height: 565px; }
.radar text { font-size: 17px; fill: #222; }
.v path, .i path { stroke-width: 4; }
.v { stroke: #bbb3dd; } .v circle { fill: #bbb3dd; stroke: none; }
.i { stroke: #5f8dd8; } .i circle { fill: #5f8dd8; stroke: none; }
.phase { width: 406px; margin-top: 86px; table-layout: fixed; border-collapse: collapse; font-size: 16px; text-align: center; white-space: nowrap; }
.phase th, .phase td { height: 33px; padding: 4px 0; border: 1px solid #1f2940; }
.phase .two td { height: 58px; }
.phase th { font-weight: 500; }
.phase th:first-child { width: 136px; }
.phase i { margin-right: 9px; height: 7px; }
.ct-foot { display: flex; align-items: flex-start; }
.win .ct-foot .trend { width: 0; flex: 1; }
.keys { flex: none; width: 218px; height: 235px; margin: 36px 6px 7px 0; padding: 16px; border: 1px solid #888; font-size: 16px; }
.keys li { height: 30px; margin-bottom: 5px; padding-left: 6px; line-height: 30px; background: #a0b0d4; }
.keys li:nth-child(2) { background: #8c9ab8; }
.keys li:nth-child(3) { background: #e58f76; }
```
